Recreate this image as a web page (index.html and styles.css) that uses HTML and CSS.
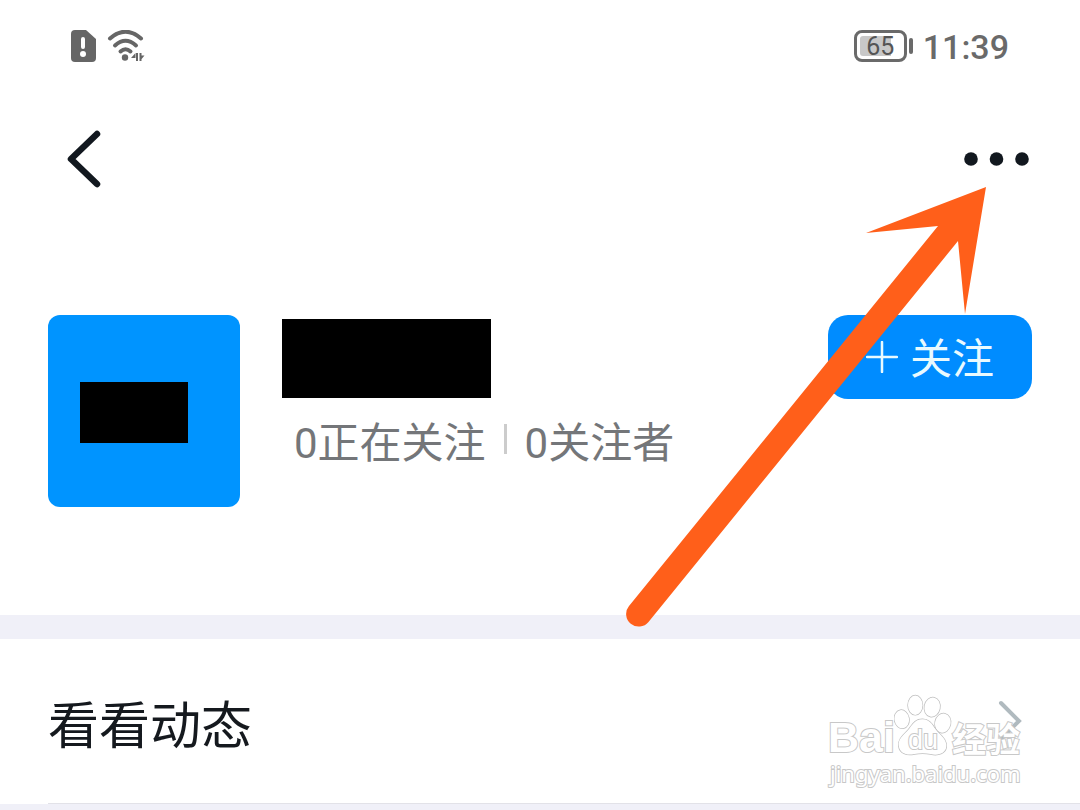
FILE: index.html
```html
<!DOCTYPE html>
<html lang="zh-CN">
<head>
<meta charset="utf-8">
<meta name="viewport" content="width=device-width, initial-scale=1">
<title>看看动态</title>
<link rel="stylesheet" href="styles.css">
</head>
<body>
<div class="page">
  <header class="status">
    <div class="status-group">
      <svg class="sim" viewBox="0 0 26 32" width="26" height="32" aria-hidden="true">
        <path fill="#666" d="M4 0H15L25 9V28Q25 32 21 32H4Q0 32 0 28V4Q0 0 4 0Z"/>
        <path d="M12 9V17" stroke="#fff" stroke-width="4" stroke-linecap="round"/>
        <circle cx="12" cy="24" r="3" fill="#fff"/>
      </svg>
      <svg class="wifi" viewBox="0 0 40 32" width="40" height="32" aria-hidden="true">
        <g fill="none" stroke="#666" stroke-width="4" stroke-linecap="round">
          <path d="M3 8.500Q18.500 -5 34 8.500"/>
          <path d="M8 15.500Q18.500 6 29 15.500"/>
          <path d="M13.500 21.500Q18.500 17 23.500 21.500"/>
        </g>
        <circle cx="18" cy="27.500" r="3.200" fill="#666"/>
        <path fill="#666" d="M29 23V31H31V23ZM28.500 23L24 28H28.500ZM32.500 23V31H34.500V23ZM33 31L37.500 25.500H33Z"/>
      </svg>
    </div>
    <div class="status-group">
      <div class="battery"><span class="level">65</span></div>
      <span class="battery-tip"></span>
      <time class="clock">11:39</time>
    </div>
  </header>

  <nav class="nav">
    <button class="icon-button" type="button" aria-label="返回">
      <svg viewBox="0 0 34 58" width="34" height="58" aria-hidden="true">
        <path d="M30 4L4 29L30 54" fill="none" stroke="#12181f" stroke-width="6.500" stroke-linecap="round" stroke-linejoin="round"/>
      </svg>
    </button>
    <button class="icon-button" type="button" aria-label="更多">
      <svg viewBox="0 0 66 14" width="66" height="14" aria-hidden="true">
        <g fill="#12181f"><circle cx="7" cy="7" r="6.800"/><circle cx="32.500" cy="7" r="6.800"/><circle cx="58" cy="7" r="6.800"/></g>
      </svg>
    </button>
  </nav>

  <section class="profile">
    <div class="avatar"><div class="avatar-mask"></div></div>
    <div class="info">
      <div class="name-mask"></div>
      <div class="stats">
        <span>0正在关注</span>
        <span class="rule"></span>
        <span>0关注者</span>
      </div>
    </div>
    <button class="follow" type="button">
      <svg viewBox="0 0 32 32" width="32" height="32" aria-hidden="true">
        <path d="M16 1V31M1 16H31" stroke="#e9faff" stroke-width="2.500" stroke-linecap="round"/>
      </svg>
      <span class="follow-label">关注</span>
    </button>
  </section>

  <main class="feed">
    <a class="row" href="#feed">
      <span class="row-label">看看动态</span>
      <svg viewBox="0 0 26 44" width="26" height="44" aria-hidden="true">
        <path d="M4 4L22 22L4 40" fill="none" stroke="#b0babf" stroke-width="4" stroke-linecap="round"/>
      </svg>
    </a>
  </main>

  <svg class="arrow" viewBox="0 0 360 440" width="360" height="440" aria-hidden="true">
    <path fill="#ff5f1a" d="M360 0L240 46L312 39L3 419A12.500 12.500 0 0 0 22.500 435L332 54L339 127Z"/>
  </svg>

  <div class="watermark">
    <div class="brand">
      <span class="bai">Bai</span>
      <span class="paw">
        <svg viewBox="0 0 60 64" width="58" height="64" aria-hidden="true">
          <g fill="#fff" stroke="#bebebe" stroke-width="1.500">
            <ellipse cx="8" cy="25" rx="7.500" ry="9.500" transform="rotate(-10 8 25)"/>
            <ellipse cx="22" cy="10.500" rx="7.500" ry="10"/>
            <ellipse cx="39.500" cy="12.500" rx="8" ry="10" transform="rotate(12 39.500 12.500)"/>
            <ellipse cx="50.500" cy="29" rx="8" ry="10" transform="rotate(12 50.500 29)"/>
            <path d="M29.500 25C38 25 40 32 45 38C50 43 55 47 54 54C53 60 46 63 38 61C32 60 27 60 21 61C13 63 6 60 5 53C4 46 9 42 14 37C19 31 21 25 29.500 25Z"/>
          </g>
        </svg>
        <span class="du">du</span>
      </span>
      <span class="jingyan">经验</span>
    </div>
    <div class="site">jingyan.baidu.com</div>
  </div>
</div>
</body>
</html>
```
FILE: styles.css
```css
* {
  box-sizing: border-box;
}

body {
  margin: 0;
  background: #f0f0f8;
  font-family: Roboto, "Noto Sans CJK SC", sans-serif;
  color: #15191e;
}

button {
  border: 0;
  padding: 0;
  background: none;
  font: inherit;
  cursor: pointer;
}

svg {
  display: block;
  flex: none;
}

.page {
  position: relative;
  overflow: hidden;
}

.status {
  display: flex;
  justify-content: space-between;
  align-items: center;
  height: 92px;
  padding: 0 71px;
  background: #fff;
}

.status-group {
  display: flex;
  align-items: center;
  gap: 10px;
}

.battery {
  display: flex;
  width: 53px;
  height: 32px;
  padding: 3px;
  border: 3px solid #6a6a6a;
  border-radius: 8px;
}

.level {
  flex: 1;
  border-radius: 3px;
  background: linear-gradient(to right, #c8c8c8 76%, transparent 76%);
  color: #555;
  font-size: 25px;
  line-height: 22px;
  text-align: center;
}

.battery-tip {
  width: 4px;
  height: 16px;
  margin-left: -8px;
  border-radius: 2px;
  background: #6a6a6a;
}

.clock {
  padding-top: 2px;
  color: #6a6a6a;
  font-size: 34px;
  font-weight: 500;
  line-height: 40px;
}

.nav {
  display: flex;
  justify-content: space-between;
  align-items: center;
  height: 134px;
  padding: 0 50px 0 67px;
  background: #fff;
}

.profile {
  display: flex;
  align-items: flex-start;
  padding: 89px 48px 108px;
  background: #fff;
}

.avatar {
  flex: none;
  width: 192px;
  height: 192px;
  padding: 67px 32px;
  border-radius: 12px;
  background: #0094ff;
}

.avatar-mask {
  width: 108px;
  height: 61px;
  background: #000;
}

.info {
  flex: 1;
  padding: 4px 0 0 42px;
}

.name-mask {
  width: 209px;
  height: 79px;
  background: #000;
}

.stats {
  display: flex;
  align-items: flex-start;
  gap: 18px;
  margin-top: 18px;
  padding-left: 12px;
  color: #747679;
  font-size: 42px;
  line-height: 56px;
  white-space: nowrap;
}

.rule {
  width: 3px;
  height: 30px;
  margin-top: 8px;
  background: #ccc;
}

.follow {
  display: flex;
  flex: none;
  justify-content: center;
  align-items: center;
  gap: 12px;
  width: 204px;
  height: 84px;
  border-radius: 20px;
  background: #008cff;
  color: #e9faff;
  font-size: 42px;
  line-height: 56px;
}

.follow-label {
  padding-top: 6px;
}

.feed {
  margin-top: 24px;
  background: linear-gradient(to right, #fff 48px, #e2e2e8 48px);
  padding-bottom: 1px;
}

.row {
  display: flex;
  justify-content: space-between;
  align-items: center;
  height: 164px;
  padding: 0 57px 0 48px;
  background: #fff;
  color: inherit;
  font-size: 51px;
  line-height: 68px;
  text-decoration: none;
}

.row-label {
  padding-top: 12px;
}

.arrow {
  position: absolute;
  top: 187px;
  right: 94px;
}

.watermark {
  position: absolute;
  top: 694px;
  right: 58px;
  width: 194px;
  color: #fff;
  font-weight: 700;
  white-space: nowrap;
  -webkit-text-stroke: 2px #c8c8c8;
  paint-order: stroke fill;
}

.brand {
  display: flex;
  align-items: flex-end;
  height: 64px;
}

.bai {
  width: 66px;
  font-family: "Liberation Sans", sans-serif;
  font-size: 43px;
  line-height: 42px;
}

.paw {
  position: relative;
}

.du {
  position: absolute;
  top: 32px;
  left: 0;
  width: 58px;
  font-family: "Liberation Sans", sans-serif;
  font-size: 27px;
  font-weight: 400;
  line-height: 28px;
  text-align: center;
}

.jingyan {
  font-family: "Noto Sans CJK SC", sans-serif;
  font-size: 34px;
  line-height: 40px;
}

.site {
  padding-left: 2px;
  font-family: "Noto Sans", sans-serif;
  font-size: 22px;
  font-weight: 400;
  line-height: 30px;
}
```
